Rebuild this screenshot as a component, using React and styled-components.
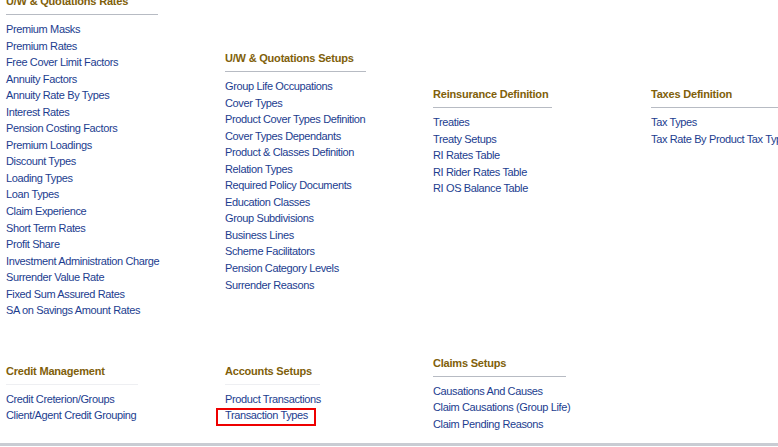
import React from "react";
import styled, { createGlobalStyle } from "styled-components";

const Global = createGlobalStyle`
  html, body { margin: 0; padding: 0; background: #fff; }
  body { font-family: "Liberation Sans", Arial, sans-serif; overflow: hidden; }
`;

const Page = styled.div`
  width: 778px;
  height: 447px;
  overflow: hidden;
  position: relative;
  background: #fff;
`;

const Content = styled.div`
  margin-top: -7px;
  padding-left: 6px;
  height: 453px;
  box-sizing: border-box;
  border-bottom: 3px solid #c9ccd3;
  display: flex;
  flex-direction: column;
`;

const Row = styled.div`
  display: grid;
  grid-template-columns: 219px 208px 218px 1fr;
  margin-top: ${(p) => p.$gap || 0}px;
`;

const Section = styled.div`
  padding-top: ${(p) => p.$offset || 0}px;
  min-width: 0;
`;

const Header = styled.div`
  width: ${(p) => p.$line}px;
  font-size: 11px;
  font-weight: bold;
  letter-spacing: -0.2px;
  line-height: 16px;
  color: #80600a;
  padding-bottom: 5px;
  border-bottom: 1px solid ${(p) => (p.$light ? "#eeeff2" : "#b7bbc3")};
  white-space: nowrap;
`;

const List = styled.ul`
  list-style: none;
  margin: 6px 0 0;
  padding: 0;
`;

const Item = styled.li`
  font-size: 11px;
  letter-spacing: -0.37px;
  line-height: 16.55px;
  white-space: nowrap;
`;

const Link = styled.a`
  color: #1c3d8f;
  text-decoration: none;
  position: relative;
  display: inline-block;
  &::after {
    content: "";
    display: ${(p) => (p.$highlight ? "block" : "none")};
    position: absolute;
    left: -9px;
    top: 1px;
    width: 96px;
    height: 14px;
    border: 2px solid #ee0000;
  }
`;

const sections1 = [
  {
    title: "U/W & Quotations Rates",
    line: 152,
    offset: 0,
    links: [
      "Premium Masks",
      "Premium Rates",
      "Free Cover Limit Factors",
      "Annuity Factors",
      "Annuity Rate By Types",
      "Interest Rates",
      "Pension Costing Factors",
      "Premium Loadings",
      "Discount Types",
      "Loading Types",
      "Loan Types",
      "Claim Experience",
      "Short Term Rates",
      "Profit Share",
      "Investment Administration Charge",
      "Surrender Value Rate",
      "Fixed Sum Assured Rates",
      "SA on Savings Amount Rates",
    ],
  },
  {
    title: "U/W & Quotations Setups",
    line: 141,
    offset: 57,
    links: [
      "Group Life Occupations",
      "Cover Types",
      "Product Cover Types Definition",
      "Cover Types Dependants",
      "Product & Classes Definition",
      "Relation Types",
      "Required Policy Documents",
      "Education Classes",
      "Group Subdivisions",
      "Business Lines",
      "Scheme Facilitators",
      "Pension Category Levels",
      "Surrender Reasons",
    ],
  },
  {
    title: "Reinsurance Definition",
    line: 119,
    offset: 93,
    links: [
      "Treaties",
      "Treaty Setups",
      "RI Rates Table",
      "RI Rider Rates Table",
      "RI OS Balance Table",
    ],
  },
  {
    title: "Taxes Definition",
    line: 140,
    offset: 93,
    links: ["Tax Types", "Tax Rate By Product Tax Types"],
  },
];

const sections2 = [
  {
    title: "Credit Management",
    line: 132,
    offset: 8,
    light: true,
    links: ["Credit Creterion/Groups", "Client/Agent Credit Grouping"],
  },
  {
    title: "Accounts Setups",
    line: 95,
    offset: 8,
    light: true,
    links: ["Product Transactions", "Transaction Types"],
    highlight: "Transaction Types",
  },
  {
    title: "Claims Setups",
    line: 133,
    offset: 0,
    links: [
      "Causations And Causes",
      "Claim Causations (Group Life)",
      "Claim Pending Reasons",
    ],
  },
];

function Block({ s }) {
  return (
    <Section $offset={s.offset}>
      <Header $line={s.line} $light={s.light}>
        {s.title}
      </Header>
      <List>
        {s.links.map((l) => (
          <Item key={l}>
            <Link href="#" $highlight={s.highlight === l}>
              {l}
            </Link>
          </Item>
        ))}
      </List>
    </Section>
  );
}

export default function App() {
  return (
    <Page>
      <Global />
      <Content>
        <Row>
          {sections1.map((s) => (
            <Block key={s.title} s={s} />
          ))}
        </Row>
        <Row $gap={36}>
          {sections2.map((s) => (
            <Block key={s.title} s={s} />
          ))}
        </Row>
      </Content>
    </Page>
  );
}
